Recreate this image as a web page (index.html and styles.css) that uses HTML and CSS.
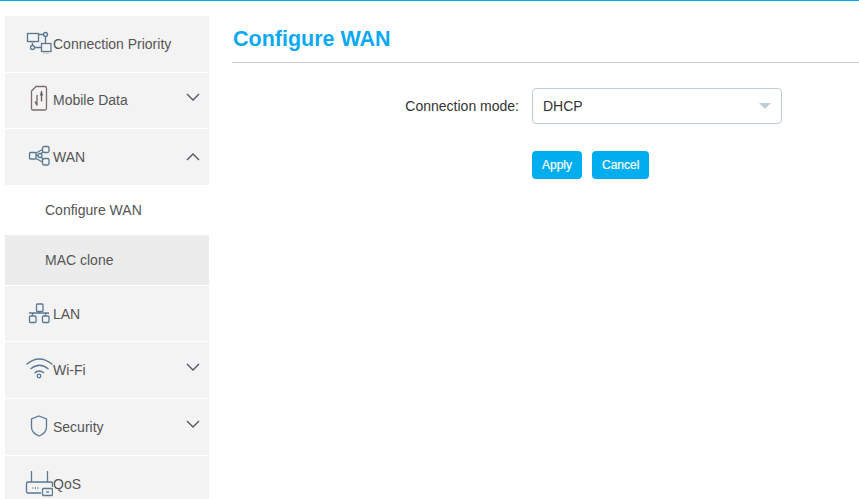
FILE: index.html
```html
<!DOCTYPE html>
<html lang="en">
<head>
<meta charset="utf-8">
<title>Configure WAN</title>
<link rel="stylesheet" href="styles.css">
</head>
<body>
<div class="page">
  <nav class="sidebar">
    <div class="item">
      <svg class="icon" viewBox="0 0 28 32"><g class="st">
        <rect x="2.500" y="5.500" width="11" height="8"/><path d="M13.500 6.500H18.500M7.500 13.500V17.500M9.500 19.500H16.500M20.500 8.500V15.500"/>
        <circle cx="20.500" cy="6.500" r="2"/><circle cx="7.500" cy="19.500" r="2"/><rect x="16.500" y="15.500" width="9.500" height="8"/></g>
        <path class="lt" d="M18 25H24M5 14.500H10"/></svg>
      <span class="label">Connection Priority</span>
    </div>
    <div class="item">
      <svg class="icon" viewBox="0 0 28 32"><g class="st">
        <path class="br" d="M11 2.500H20Q21.500 2.500 21.500 4V24.500Q21.500 26 20 26H8Q6.500 26 6.500 24.500V7Z"/>
        <path class="ar" d="M12 11V21.500M12 21.500L10 17.500M16.500 7V17.500"/><path class="fl" d="M16.500 6.500L14.800 11.500H18.200Z"/></g></svg>
      <span class="label">Mobile Data</span>
      <svg class="chev" viewBox="0 0 14 8"><path d="M1 1L7 7L13 1"/></svg>
    </div>
    <div class="item last-parent">
      <svg class="icon" viewBox="0 0 28 32"><g class="st">
        <rect x="4.500" y="11.500" width="6.500" height="6.500" rx="1"/><rect x="17.500" y="5.500" width="6.500" height="6" rx="1.500"/><rect x="17.500" y="17.500" width="6.500" height="6.500" rx="1.500"/>
        <circle cx="15" cy="14.500" r="2"/><path d="M11 14.500H13M16 12.800L18.500 10.500M16 16.200L18.500 18.500M11 12L17.500 8.500M11 17.500L17.500 21"/></g></svg>
      <span class="label">WAN</span>
      <svg class="chev up" viewBox="0 0 14 8"><path d="M1 7L7 1L13 7"/></svg>
    </div>
    <div class="sub current">Configure WAN</div>
    <div class="sub">MAC clone</div>
    <div class="item">
      <svg class="icon" viewBox="0 0 28 32"><g class="st">
        <rect x="11.500" y="6" width="6.500" height="7.500" rx="1"/><path d="M14.500 13.500V15M4 15H24M7.500 15V17.500M20.500 15V17.500"/>
        <rect x="4.500" y="18" width="6.500" height="6.500" rx="1"/><rect x="17.500" y="18" width="6.500" height="6.500" rx="1"/></g></svg>
      <span class="label">LAN</span>
    </div>
    <div class="item">
      <svg class="icon" viewBox="0 0 28 32"><g class="st">
        <path d="M1.500 10.500Q14 -0.500 27.500 10.500M5.500 15Q14.500 7.500 23.500 15M9.500 19Q14.500 15 19 19"/><circle cx="14" cy="22" r="1.800"/></g></svg>
      <span class="label">Wi-Fi</span>
      <svg class="chev" viewBox="0 0 14 8"><path d="M1 1L7 7L13 1"/></svg>
    </div>
    <div class="item">
      <svg class="icon" viewBox="0 0 28 32"><g class="st">
        <path d="M14 5L21.500 8V16Q21.500 22 14 25Q6.500 22 6.500 16V8Z"/></g></svg>
      <span class="label">Security</span>
      <svg class="chev" viewBox="0 0 14 8"><path d="M1 1L7 7L13 1"/></svg>
    </div>
    <div class="item">
      <svg class="icon" viewBox="0 0 28 32"><g class="st">
        <path d="M6.500 3V14M22.500 3V14M16 25H3Q1.500 25 1.500 23.500V15.500Q1.500 14 3 14H26Q27.500 14 27.500 15.500V19"/>
        <path class="dot" d="M7.500 20H8.500M10 20H11M12.500 20H13.500"/>
        <rect x="17.500" y="20.500" width="10" height="7" rx="1"/><path d="M21 24H24"/></g></svg>
      <span class="label">QoS</span>
    </div>
  </nav>
  <main class="content">
    <h1 class="title">Configure WAN</h1>
    <form class="form">
      <div class="row">
        <label class="field-label">Connection mode:</label>
        <div class="select"><span>DHCP</span><i class="caret"></i></div>
      </div>
      <div class="actions">
        <button type="button" class="btn">Apply</button>
        <button type="button" class="btn">Cancel</button>
      </div>
    </form>
  </main>
</div>
</body>
</html>
```
FILE: styles.css
```css
* { box-sizing: border-box; }
html, body { margin: 0; height: 100%; overflow: hidden; background: #fff; }
body { font-family: "Liberation Sans", Arial, sans-serif; font-size: 14px; color: #333; }
.page { display: flex; height: 499px; border-top: 1px solid #00aef0; overflow: hidden; }
.sidebar { width: 204px; margin-left: 5px; padding-top: 15px; flex: none; display: flex; flex-direction: column; }
.item { flex: none; height: 55.6px; margin-bottom: 1px; padding-left: 20px; padding-right: 9px; background: #f3f3f3; display: flex; align-items: center; color: #555; }
.item.last-parent { margin-bottom: 0; }
.item:last-child { margin-top: 0.500px; }
.icon { width: 28px; height: 32px; flex: none; }
.label { flex: 1; line-height: 16px; }
.st { fill: none; stroke: #5a7892; stroke-width: 1.300; }
.br { stroke: #7a6f6a; }
.ar { stroke: #6a6460; }
.fl { fill: #6a6460; stroke: none; }
.dot { stroke-width: 1.500; }
.lt { fill: none; stroke: #bbb; stroke-width: 1; }
.chev { width: 14px; height: 8px; flex: none; margin-top: -6px; fill: none; stroke: #4a5560; stroke-width: 1.300; }
.chev.up { margin-top: 1px; }
.sub { flex: none; height: 50px; padding-left: 40px; display: flex; align-items: center; background: #ececec; color: #555; }
.sub.current { background: #fff; }
.sub + .item { margin-top: 1px; }
.content { flex: 1; padding: 0 0 0 23px; min-width: 0; }
.title { margin: 0; height: 62px; padding: 24px 0 0 1px; border-bottom: 1px solid #ccc; font-size: 21.500px; line-height: 28px; font-weight: bold; color: #0aa9f2; }
.form { display: flex; flex-direction: column; }
.row { display: flex; align-items: center; margin-top: 25px; }
.field-label { width: 287px; text-align: right; color: #333; }
.select { width: 250px; height: 36px; margin-left: 13px; padding: 0 10px; border: 1px solid #c0ccda; border-radius: 4px; display: flex; align-items: center; justify-content: space-between; color: #333; }
.caret { width: 0; height: 0; border-left: 6.500px solid transparent; border-right: 6.500px solid transparent; border-top: 6.500px solid #c0ccda; }
.actions { display: flex; gap: 10px; margin: 27px 0 0 300px; }
.btn { height: 28px; padding: 0 10px; border: 0; border-radius: 4px; background: #00aef0; color: #fff; font: 12px "Liberation Sans", Arial, sans-serif; -webkit-text-stroke: 0.2px #fff; }
```
